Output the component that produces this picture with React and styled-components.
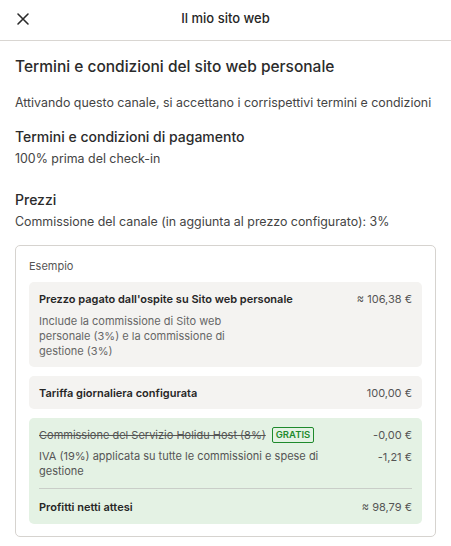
import React from 'react'
import styled, { createGlobalStyle } from 'styled-components'

const Global = createGlobalStyle`
  * { box-sizing: border-box; }
  body {
    margin: 0;
    background: #fff;
    font-family: Inter, "Noto Sans", sans-serif;
    color: #2b2b2b;
  }
`

function CloseIcon() {
  return (
    <svg width="14" height="14" viewBox="0 0 14 14" fill="none">
      <path d="M2 2L12 12M12 2L2 12" stroke="#2b2b2b" strokeWidth="1.6" strokeLinecap="round" />
    </svg>
  )
}

export default function App() {
  return (
    <Page>
      <Global />
      <Header>
        <CloseButton><CloseIcon /></CloseButton>
        <HeaderTitle>Il mio sito web</HeaderTitle>
      </Header>
      <Content>
        <Title>Termini e condizioni del sito web personale</Title>
        <Text>Attivando questo canale, si accettano i corrispettivi termini e condizioni</Text>
        <Section>
          <SubTitle>Termini e condizioni di pagamento</SubTitle>
          <Text>100% prima del check-in</Text>
        </Section>
        <Section gap>
          <SubTitle>Prezzi</SubTitle>
          <Text>Commissione del canale (in aggiunta al prezzo configurato): 3%</Text>
        </Section>
        <Card>
          <CardLabel>Esempio</CardLabel>
          <Box>
            <Row>
              <RowLabel>Prezzo pagato dall'ospite su Sito web personale</RowLabel>
              <Value>≈ 106,38 €</Value>
            </Row>
            <Note>Include la commissione di Sito web personale (3%) e la commissione di gestione (3%)</Note>
          </Box>
          <Box>
            <Row>
              <RowLabel>Tariffa giornaliera configurata</RowLabel>
              <Value>100,00 €</Value>
            </Row>
          </Box>
          <Box green>
            <Row>
              <StrikeLabel>
                <s>Commissione del Servizio Holidu Host (8%)</s>
                <Badge>GRATIS</Badge>
              </StrikeLabel>
              <Value>-0,00 €</Value>
            </Row>
            <Row top>
              <PlainLabel>IVA (19%) applicata su tutte le commissioni e spese di gestione</PlainLabel>
              <Value>-1,21 €</Value>
            </Row>
            <Divider />
            <Row>
              <RowLabel>Profitti netti attesi</RowLabel>
              <Value>≈ 98,79 €</Value>
            </Row>
          </Box>
        </Card>
      </Content>
    </Page>
  )
}

const Page = styled.div`
  width: 451px;
  min-height: 546px;
`

const Header = styled.header`
  height: 41px;
  border-bottom: 1px solid #d9d6d2;
  display: flex;
  align-items: center;
  justify-content: center;
  position: relative;
`

const CloseButton = styled.button`
  position: absolute;
  left: 12px;
  top: 8px;
  width: 22px;
  height: 22px;
  padding: 0;
  border: none;
  background: none;
  display: flex;
  align-items: center;
  justify-content: center;
`

const HeaderTitle = styled.div`
  font-size: 13px;
  font-weight: 500;
  color: #262626;
  margin-top: -4px;
`

const Content = styled.main`
  padding: 14px 15px 0;
`

const Title = styled.h1`
  margin: 0 0 14px;
  font-size: 15.5px;
  line-height: 24px;
  font-weight: 500;
  color: #2b2b2b;
`

const Text = styled.p`
  margin: 0;
  font-size: 12.4px;
  line-height: 20px;
  color: #444;
`

const Section = styled.section`
  margin-top: ${p => (p.gap ? '21px' : '14px')};
`

const SubTitle = styled.h2`
  margin: 0 0 2px;
  font-size: 14px;
  line-height: 20px;
  font-weight: 500;
  color: #2b2b2b;
`

const Card = styled.div`
  margin-top: 13px;
  border: 1px solid #d6d3cf;
  border-radius: 5px;
  padding: 13px 13px 12px;
  display: flex;
  flex-direction: column;
  gap: 9px;
`

const CardLabel = styled.div`
  font-size: 11px;
  line-height: 14px;
  color: #555;
`

const Box = styled.div`
  background: ${p => (p.green ? '#e4f2e4' : '#f4f3f1')};
  border-radius: 5px;
  padding: 9px 10px ${p => (p.green ? '9px' : '8px')};
  display: flex;
  flex-direction: column;
`

const Row = styled.div`
  display: flex;
  justify-content: space-between;
  align-items: flex-start;
  gap: 16px;
  margin-top: ${p => (p.top ? '6px' : '0')};
`

const RowLabel = styled.div`
  font-size: 11px;
  line-height: 16px;
  font-weight: 600;
  color: #262626;
`

const PlainLabel = styled.div`
  font-size: 11px;
  line-height: 15px;
  color: #555;
  max-width: 290px;
`

const StrikeLabel = styled.div`
  display: flex;
  align-items: center;
  gap: 6px;
  font-size: 11px;
  line-height: 16px;
  color: #555;
`

const Badge = styled.span`
  font-size: 9.5px;
  font-weight: 600;
  line-height: 12px;
  color: #1e8a2c;
  border: 1px solid #1e8a2c;
  border-radius: 2px;
  padding: 1px 3px;
`

const Value = styled.div`
  font-size: 11px;
  line-height: 16px;
  color: #555;
  white-space: nowrap;
`

const Note = styled.div`
  margin-top: 7px;
  font-size: 11px;
  line-height: 15px;
  color: #666;
  max-width: 188px;
`

const Divider = styled.hr`
  margin: 9px 0 10px;
  border: none;
  border-top: 1px solid #c9cec8;
`
